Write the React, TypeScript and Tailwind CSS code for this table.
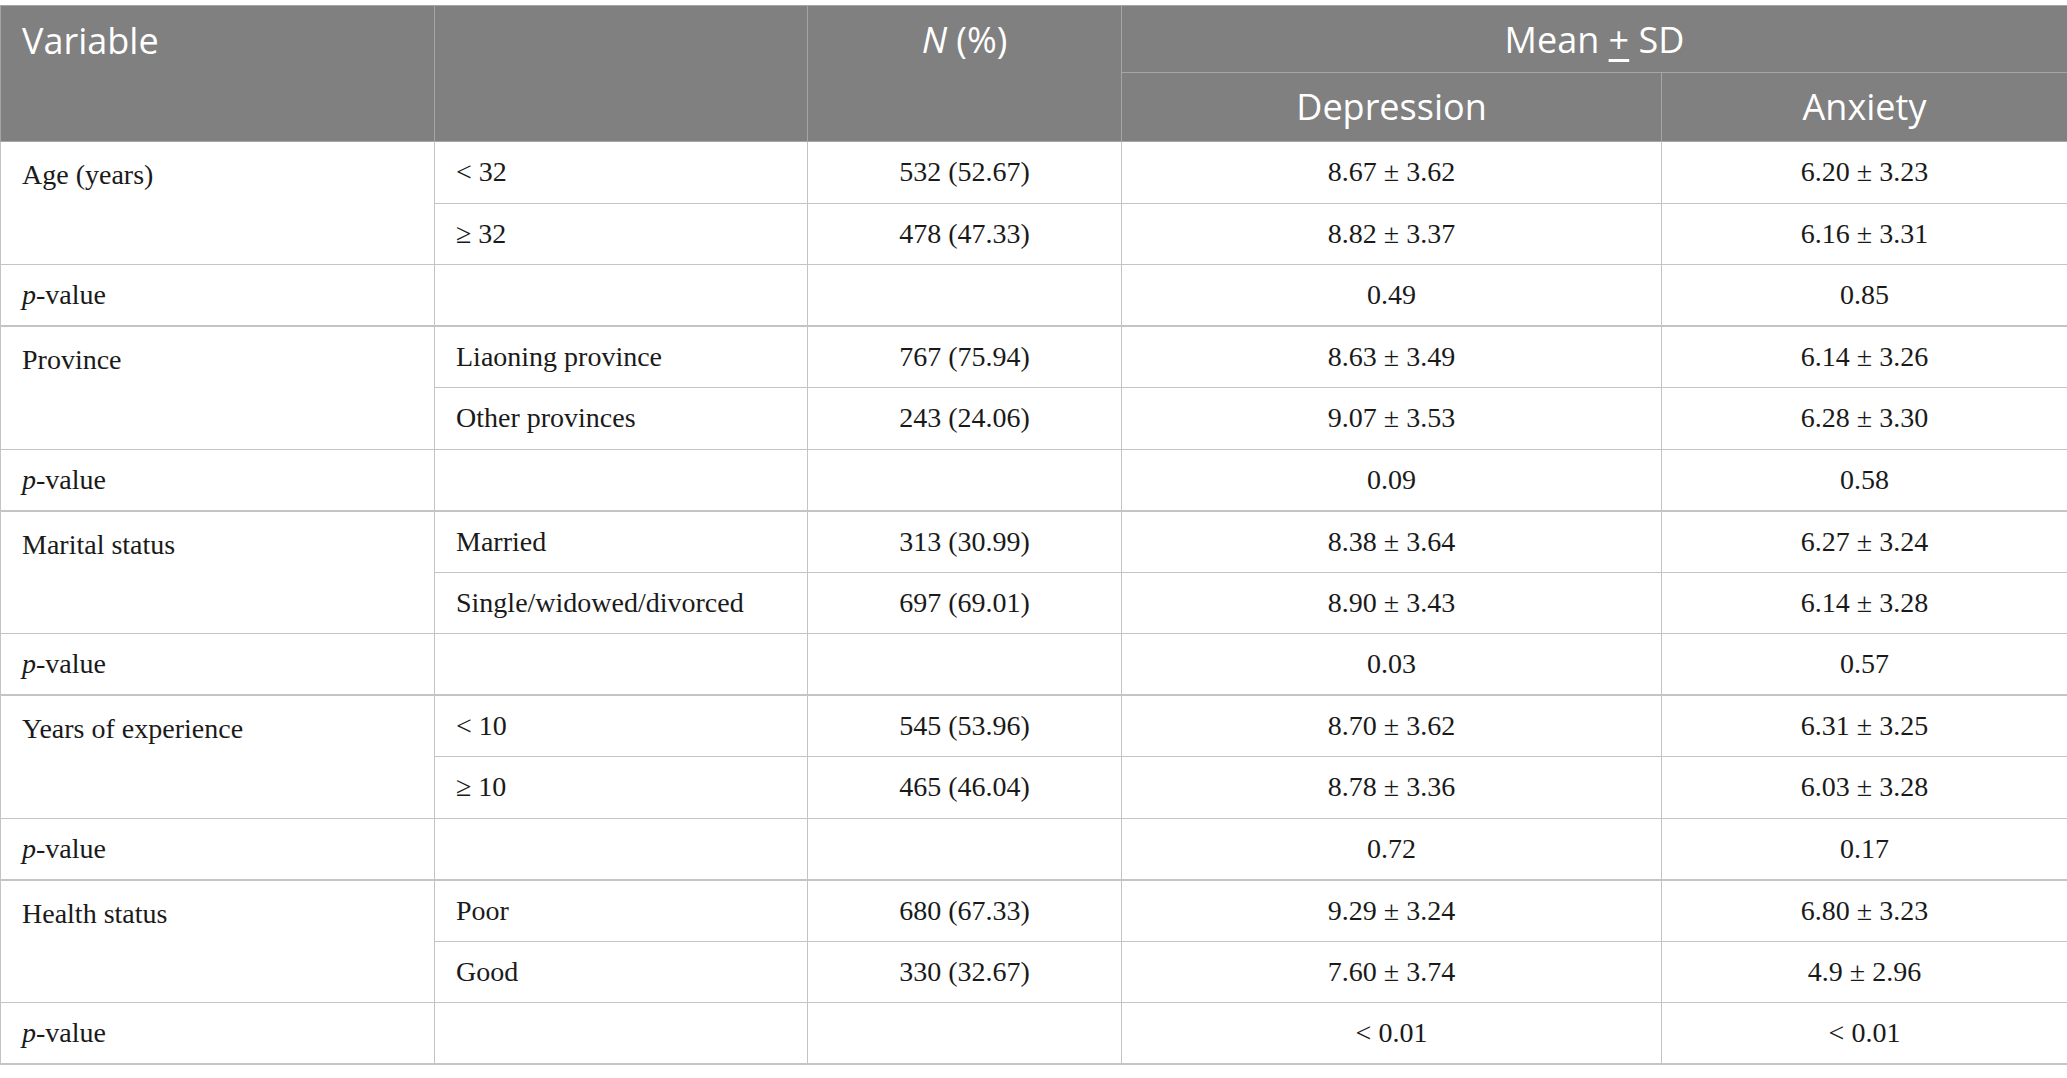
import React from "react";

type Group = {
  label: string;
  rows: { cat: string; n: string; dep: string; anx: string }[];
  p: { dep: string; anx: string };
};

const groups: Group[] = [
  {
    label: "Age (years)",
    rows: [
      { cat: "< 32", n: "532 (52.67)", dep: "8.67 ± 3.62", anx: "6.20 ± 3.23" },
      { cat: "≥ 32", n: "478 (47.33)", dep: "8.82 ± 3.37", anx: "6.16 ± 3.31" },
    ],
    p: { dep: "0.49", anx: "0.85" },
  },
  {
    label: "Province",
    rows: [
      { cat: "Liaoning province", n: "767 (75.94)", dep: "8.63 ± 3.49", anx: "6.14 ± 3.26" },
      { cat: "Other provinces", n: "243 (24.06)", dep: "9.07 ± 3.53", anx: "6.28 ± 3.30" },
    ],
    p: { dep: "0.09", anx: "0.58" },
  },
  {
    label: "Marital status",
    rows: [
      { cat: "Married", n: "313 (30.99)", dep: "8.38 ± 3.64", anx: "6.27 ± 3.24" },
      { cat: "Single/widowed/divorced", n: "697 (69.01)", dep: "8.90 ± 3.43", anx: "6.14 ± 3.28" },
    ],
    p: { dep: "0.03", anx: "0.57" },
  },
  {
    label: "Years of experience",
    rows: [
      { cat: "< 10", n: "545 (53.96)", dep: "8.70 ± 3.62", anx: "6.31 ± 3.25" },
      { cat: "≥ 10", n: "465 (46.04)", dep: "8.78 ± 3.36", anx: "6.03 ± 3.28" },
    ],
    p: { dep: "0.72", anx: "0.17" },
  },
  {
    label: "Health status",
    rows: [
      { cat: "Poor", n: "680 (67.33)", dep: "9.29 ± 3.24", anx: "6.80 ± 3.23" },
      { cat: "Good", n: "330 (32.67)", dep: "7.60 ± 3.74", anx: "4.9 ± 2.96" },
    ],
    p: { dep: "< 0.01", anx: "< 0.01" },
  },
];

const cell = "border border-[#c4c4c4] h-[61.5px] px-[21px] align-middle";
const head = "border border-[#a6a6a6] font-normal text-white";

export default function App() {
  return (
    <div className="w-[2067px] h-[1078px] bg-white pt-[5px]">
      <table
        className="w-[2067px] border-collapse text-[28px] text-[#1a1a1a] table-fixed"
        style={{ fontFamily: '"Liberation Serif", "Times New Roman", serif' }}
      >
        <colgroup>
          <col className="w-[434px]" />
          <col className="w-[373px]" />
          <col className="w-[314px]" />
          <col className="w-[540px]" />
          <col className="w-[406px]" />
        </colgroup>
        <thead
          className="bg-[#7f807f] text-[36px] leading-[48px]"
          style={{ fontFamily: '"Open Sans", "Noto Sans", sans-serif' }}
        >
          <tr className="h-[67px]">
            <th rowSpan={2} className={`${head} text-left align-top px-[21px] pt-[11px]`}>
              Variable
            </th>
            <th rowSpan={2} className={head}></th>
            <th rowSpan={2} className={`${head} text-center align-top pt-[10px]`}>
              <i>N</i> (%)
            </th>
            <th colSpan={2} className={`${head} text-center pt-[2px]`}>
              Mean <span className="underline underline-offset-[6px]">+</span> SD
            </th>
          </tr>
          <tr className="h-[69px]">
            <th className={`${head} text-center`}>Depression</th>
            <th className={`${head} text-center`}>Anxiety</th>
          </tr>
        </thead>
        <tbody>
          {groups.map((g) => (
            <React.Fragment key={g.label}>
              {g.rows.map((r, i) => (
                <tr key={r.cat}>
                  {i === 0 && (
                    <td rowSpan={2} className={`${cell} align-top pt-[12px]`}>
                      {g.label}
                    </td>
                  )}
                  <td className={cell}>{r.cat}</td>
                  <td className={`${cell} text-center`}>{r.n}</td>
                  <td className={`${cell} text-center`}>{r.dep}</td>
                  <td className={`${cell} text-center`}>{r.anx}</td>
                </tr>
              ))}
              <tr className="border-b-2 border-[#c4c4c4]">
                <td className={cell}>
                  <i>p</i>-value
                </td>
                <td className={cell}></td>
                <td className={cell}></td>
                <td className={`${cell} text-center`}>{g.p.dep}</td>
                <td className={`${cell} text-center`}>{g.p.anx}</td>
              </tr>
            </React.Fragment>
          ))}
        </tbody>
      </table>
    </div>
  );
}
